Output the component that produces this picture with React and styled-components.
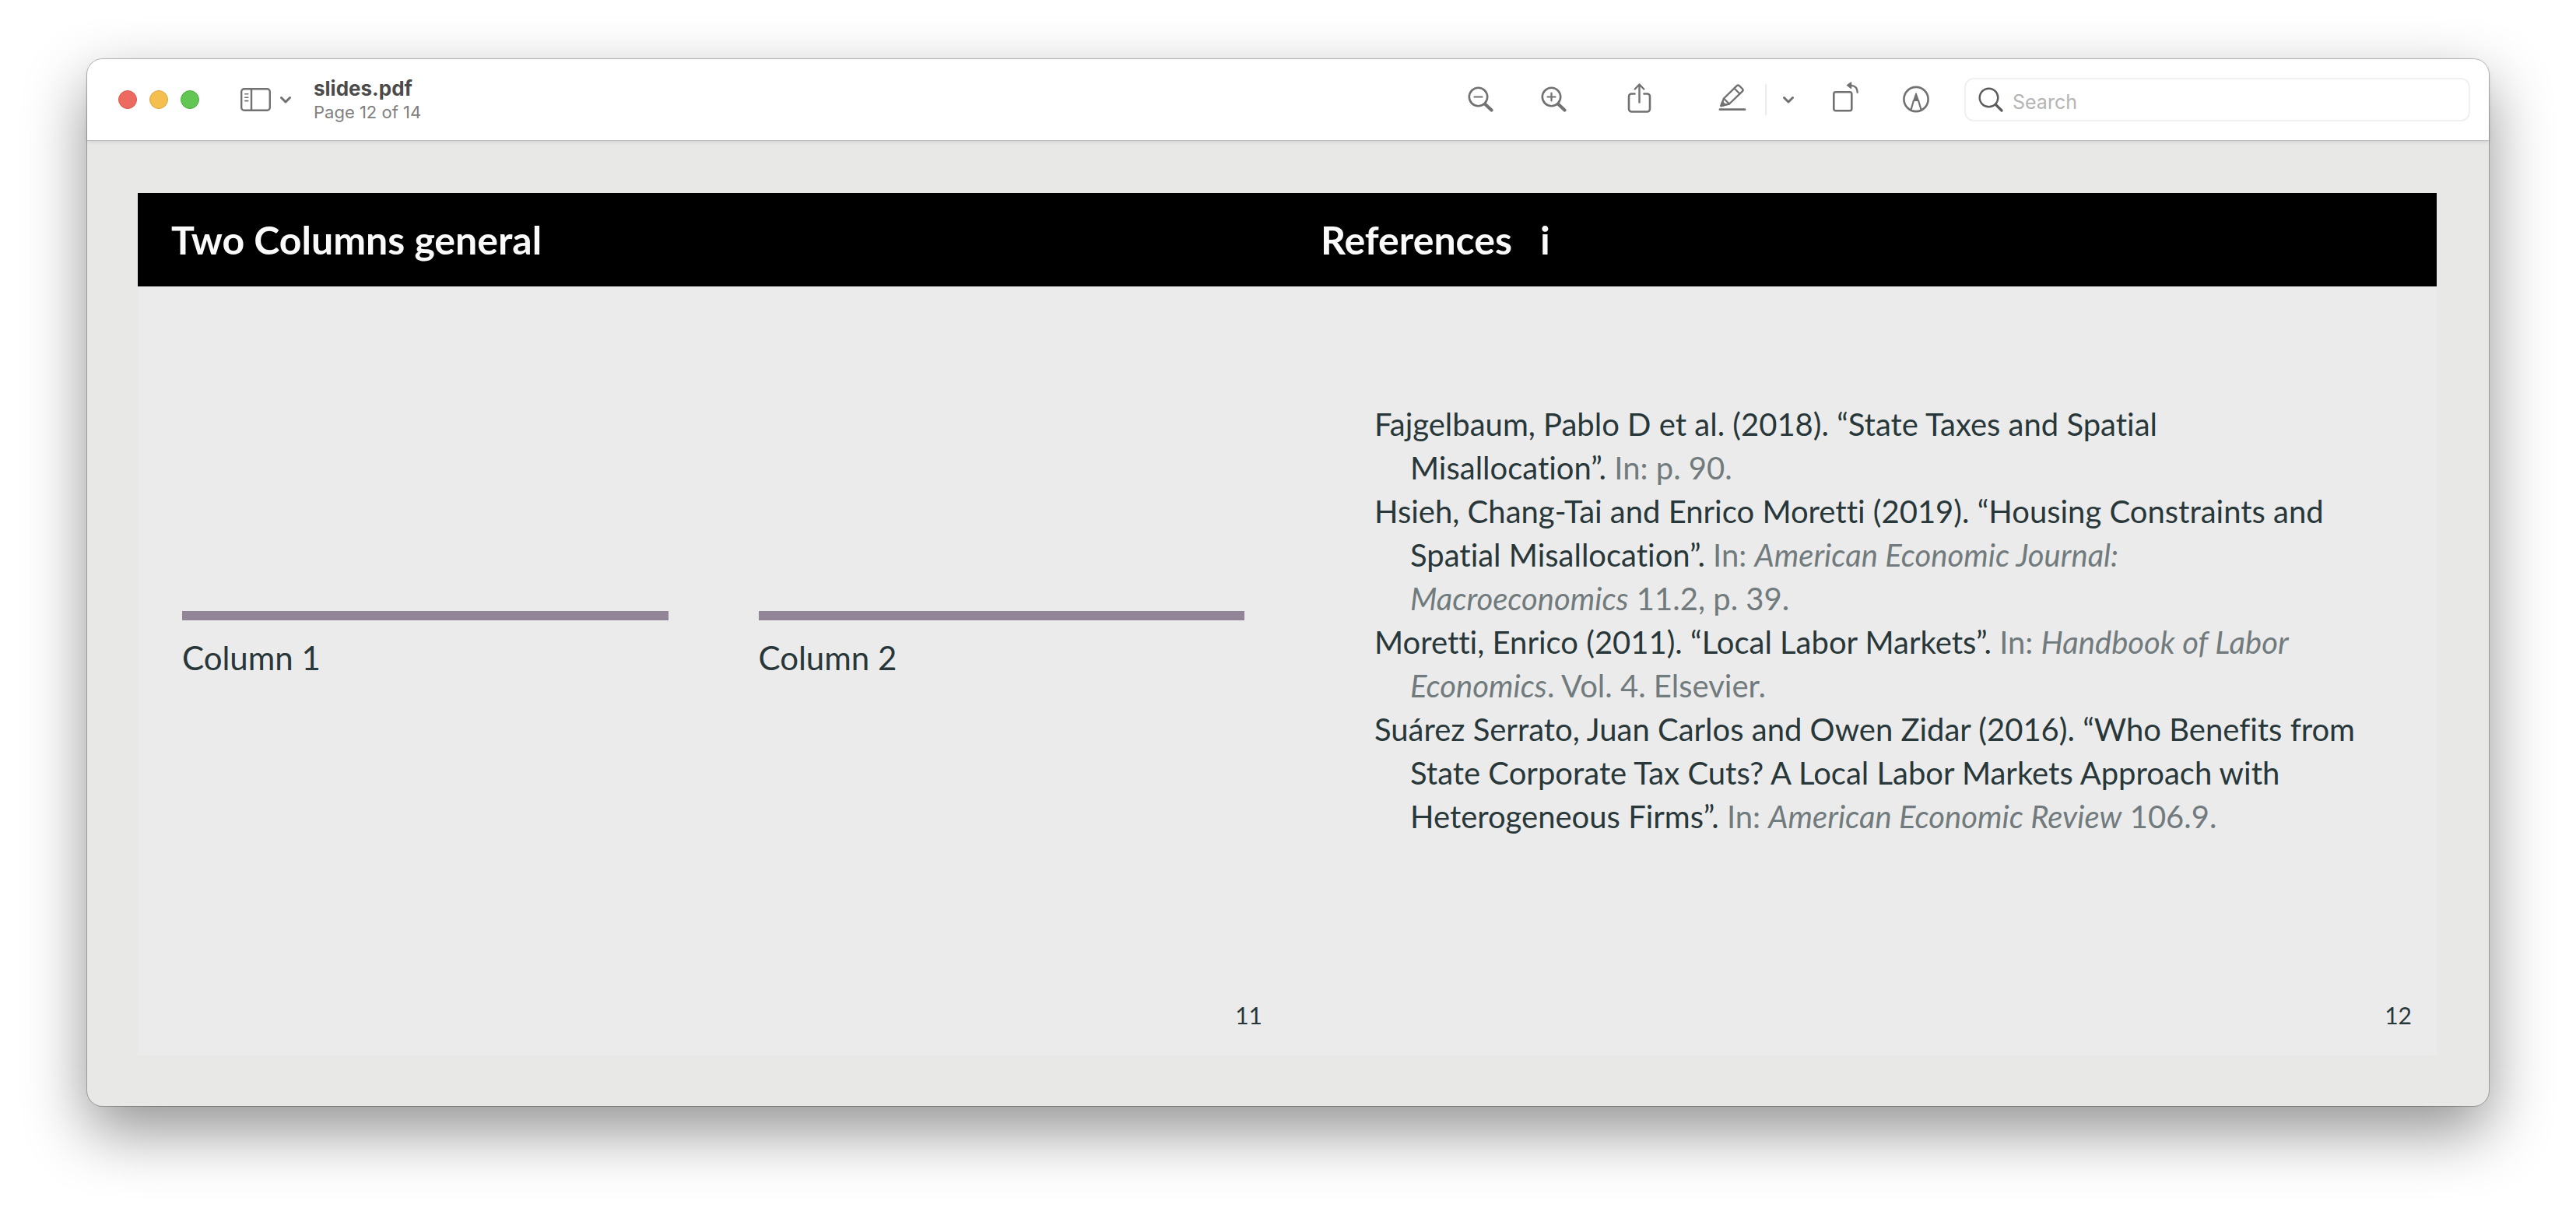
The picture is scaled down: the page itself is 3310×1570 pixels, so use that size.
import React from 'react';
import styled, { createGlobalStyle } from 'styled-components';

const uiFont = 'Inter, "Liberation Sans", sans-serif';
const slideFont = 'Lato, "Open Sans", sans-serif';

const GlobalStyle = createGlobalStyle`
  *, *::before, *::after { box-sizing: border-box; }
  body { margin: 0; background: #ffffff; }
`;

const Desktop = styled.main`
  padding: 76px 112px 148px;
`;

const Window = styled.section`
  border-radius: 20px;
  background: #e8e8e6;
  box-shadow: 0 0 0 1px rgba(0, 0, 0, 0.24), 0 32px 80px rgba(0, 0, 0, 0.43);
`;

const Toolbar = styled.header`
  display: flex;
  align-items: center;
  height: 104px;
  padding: 0 24px 0 40px;
  border-radius: 20px 20px 0 0;
  background: #ffffff;
  box-shadow: 0 1px 0 #bfbfbe, 0 2px 5px rgba(0, 0, 0, 0.12);
  font-family: ${uiFont};
  color: #717171;
`;

const plainButton = `
  display: flex;
  align-items: center;
  justify-content: center;
  flex: none;
  padding: 0;
  border: 0;
  background: none;
  color: inherit;
`;

const Lights = styled.div`
  display: flex;
  gap: 16px;
  margin-right: 53px;
`;

const Light = styled.button`
  ${plainButton}
  width: 24px;
  height: 24px;
  border: 1px solid ${(p) => p.$edge};
  border-radius: 50%;
  background: ${(p) => p.$fill};
`;

const SidebarButton = styled.button`
  ${plainButton}
  gap: 12px;
  margin-right: 29px;
`;

const DocumentInfo = styled.div`
  flex: 1;
`;

const FileName = styled.h1`
  margin: 0;
  font-size: 26px;
  line-height: 32px;
  font-weight: 700;
  color: #4b4b4b;
`;

const PageStatus = styled.p`
  margin: 0;
  font-size: 22px;
  line-height: 28px;
  color: #808080;
`;

const ToolButton = styled.button`
  ${plainButton}
  width: ${(p) => (p.$narrow ? 24 : 40)}px;
  height: 40px;
  margin-right: ${(p) => p.$after}px;
`;

const Divider = styled.span`
  width: 2px;
  height: 40px;
  margin-right: 16px;
  background: #ececec;
`;

const SearchBox = styled.label`
  display: flex;
  align-items: center;
  gap: 12px;
  flex: 0 1 650px;
  height: 56px;
  padding: 0 16px;
  border: 2px solid #f0f0f0;
  border-radius: 12px;
  color: #5a5a5a;
`;

const SearchInput = styled.input`
  flex: 1;
  min-width: 0;
  height: 48px;
  padding: 6px 0 0;
  border: 0;
  outline: 0;
  background: none;
  font: 25px ${uiFont};
  color: #4b4b4b;
  &::placeholder { color: #b4b4b4; opacity: 1; }
`;

const Viewer = styled.div`
  display: grid;
  grid-template-columns: 1fr 1fr;
  padding: 68px 67px 65px 65px;
`;

const Slide = styled.article`
  display: flex;
  flex-direction: column;
  aspect-ratio: 4 / 3;
  background: #ebebeb;
  font-family: ${slideFont};
  font-variant-ligatures: no-common-ligatures;
  color: #283739;
`;

const SlideTitle = styled.h2`
  display: flex;
  align-items: center;
  gap: 36px;
  height: 120px;
  margin: 0;
  padding-left: 43px;
  background: #000000;
  font-size: 50px;
  line-height: 60px;
  font-weight: 700;
  color: #fafafa;
`;

const SlideBody = styled.div`
  display: flex;
  flex: 1;
  flex-direction: column;
  justify-content: center;
`;

const SlideFooter = styled.footer`
  display: flex;
  align-items: flex-end;
  justify-content: flex-end;
  height: 130px;
  padding: 0 32px 34px 0;
  font-size: 30px;
  line-height: 36px;
`;

const Columns = styled.div`
  display: grid;
  grid-template-columns: 1fr 1fr;
  gap: 116px;
  padding: 64px 55px 0 57px;
`;

const Column = styled.p`
  margin: 0;
  padding-top: 20px;
  border-top: 12px solid #918597;
  font-size: 42px;
  line-height: 56px;
`;

const References = styled.ul`
  margin: 0;
  padding: 0 0 0 158px;
  list-style: none;
  font-size: 40px;
  line-height: 56px;
  white-space: nowrap;
`;

const Reference = styled.li`
  text-indent: -46px;
`;

const Source = styled.span`
  color: #717b7d;
`;

const ChevronIcon = () => (
  <svg width="14" height="14" viewBox="0 0 14 14" fill="none" stroke="currentColor" strokeWidth="3" strokeLinecap="round" strokeLinejoin="round" aria-hidden="true">
    <path d="M1.5 4.5 7 10l5.5-5.5" />
  </svg>
);

const Icon = ({ children }) => (
  <svg width="40" height="40" viewBox="0 0 40 40" overflow="visible" fill="none" stroke="currentColor" strokeWidth="2.6" strokeLinecap="round" strokeLinejoin="round" aria-hidden="true">
    {children}
  </svg>
);

const Magnifier = ({ children }) => (
  <Icon>
    <circle cx="17.5" cy="16.5" r="11.7" />
    <path d="M26.5 26 34.5 33.5" strokeWidth="4.2" />
    {children}
  </Icon>
);

const SidebarIcon = () => (
  <svg width="39" height="30" viewBox="0 0 39 30" fill="none" stroke="currentColor" strokeWidth="2.4" strokeLinecap="round" aria-hidden="true">
    <rect x="1.2" y="1.2" width="36.6" height="27.6" rx="3.5" />
    <path d="M14 1.5v27" />
    <path d="M5.8 7.8h4M5.8 12.2h4M5.8 16.6h4" strokeWidth="1.6" />
  </svg>
);

const App = () => (
  <>
    <GlobalStyle />
    <Desktop>
      <Window>
        <Toolbar>
          <Lights>
            <Light type="button" aria-label="Close" $fill="#ec6a5f" $edge="#d85a50" />
            <Light type="button" aria-label="Minimize" $fill="#f5bf4f" $edge="#dba640" />
            <Light type="button" aria-label="Zoom window" $fill="#62c554" $edge="#4fae42" />
          </Lights>
          <SidebarButton type="button" aria-label="Sidebar">
            <SidebarIcon />
            <ChevronIcon />
          </SidebarButton>
          <DocumentInfo>
            <FileName>slides.pdf</FileName>
            <PageStatus>Page 12 of 14</PageStatus>
          </DocumentInfo>
          <ToolButton type="button" aria-label="Zoom out" $after={54}>
            <Magnifier><path d="M12.5 16.5h10" strokeWidth="2.2" /></Magnifier>
          </ToolButton>
          <ToolButton type="button" aria-label="Zoom in" $after={70}>
            <Magnifier><path d="M12.5 16.5h10M17.5 11.5v10" strokeWidth="2.2" /></Magnifier>
          </ToolButton>
          <ToolButton type="button" aria-label="Share" $after={80}>
            <Icon>
              <path d="M14.5 12.5h-4a3.5 3.5 0 0 0-3.500 3.500v16a3.500 3.500 0 0 0 3.500 3.500h20a3.500 3.500 0 0 0 3.500-3.500V16a3.500 3.500 0 0 0-3.500-3.500h-4" />
              <path d="M20.5 23.5V.5M14.7 6.500 20.5.5l5.800 6" strokeWidth="2.4" />
            </Icon>
          </ToolButton>
          <ToolButton type="button" aria-label="Highlight" $after={22}>
            <Icon>
              <path d="M4 32.7h32" strokeWidth="2.8" />
              <path d="M5.5 28 9 18.5 25.5 2.3c1.200-1.100 2.400-1 3.500 0l3.800 3.700c1.100 1.100 1 2.300 0 3.400L16 25.500Z" strokeWidth="2.4" />
              <path d="m22.5 5.500 7 7M9 18.500l7 7" strokeWidth="2.2" />
              <path d="M5.5 28 7 23.500l3.500 3Z" fill="currentColor" />
            </Icon>
          </ToolButton>
          <Divider />
          <ToolButton type="button" aria-label="Highlight options" $narrow $after={42}>
            <ChevronIcon />
          </ToolButton>
          <ToolButton type="button" aria-label="Rotate left" $after={50}>
            <Icon>
              <rect x="4.3" y="10.3" width="23" height="24" rx="2.5" />
              <path d="M27 1.800c5 .3 7.800 4 7.800 10" strokeWidth="2.2" strokeLinecap="butt" />
              <path d="M21.5 1.500 26.500-2v7.300Z" fill="currentColor" strokeWidth="1.5" />
            </Icon>
          </ToolButton>
          <ToolButton type="button" aria-label="Markup" $after={42}>
            <Icon>
              <circle cx="20" cy="19.5" r="15.6" />
              <path d="M13.5 33 17 21h6l3.500 12" strokeWidth="2.2" />
              <path d="M17 21 20 12l3 9Z" fill="currentColor" strokeWidth="1.5" />
            </Icon>
          </ToolButton>
          <SearchBox>
            <svg width="32" height="32" viewBox="0 0 32 32" fill="none" stroke="currentColor" strokeLinecap="round" aria-hidden="true">
              <circle cx="13.5" cy="13.5" r="11.8" strokeWidth="2.4" />
              <path d="m22.5 22.5 7.5 7.500" strokeWidth="3.2" />
            </svg>
            <SearchInput type="search" placeholder="Search" aria-label="Search" />
          </SearchBox>
        </Toolbar>
        <Viewer>
          <Slide>
            <SlideTitle>Two Columns general</SlideTitle>
            <SlideBody>
              <Columns>
                <Column>Column 1</Column>
                <Column>Column 2</Column>
              </Columns>
            </SlideBody>
            <SlideFooter>11</SlideFooter>
          </Slide>
          <Slide>
            <SlideTitle><span>References</span> <span>i</span></SlideTitle>
            <SlideBody>
              <References>
                <Reference>
                  Fajgelbaum, Pablo D et al. (2018). “State Taxes and Spatial<br />
                  Misallocation”. <Source>In: p. 90.</Source>
                </Reference>
                <Reference>
                  Hsieh, Chang-Tai and Enrico Moretti (2019). “Housing Constraints and<br />
                  Spatial Misallocation”. <Source>In: <i>American Economic Journal:<br />
                  Macroeconomics</i> 11.2, p. 39.</Source>
                </Reference>
                <Reference>
                  Moretti, Enrico (2011). “Local Labor Markets”. <Source>In: <i>Handbook of Labor<br />
                  Economics</i>. Vol. 4. Elsevier.</Source>
                </Reference>
                <Reference>
                  Suárez Serrato, Juan Carlos and Owen Zidar (2016). “Who Benefits from<br />
                  State Corporate Tax Cuts? A Local Labor Markets Approach with<br />
                  Heterogeneous Firms”. <Source>In: <i>American Economic Review</i> 106.9.</Source>
                </Reference>
              </References>
            </SlideBody>
            <SlideFooter>12</SlideFooter>
          </Slide>
        </Viewer>
      </Window>
    </Desktop>
  </>
);

export default App;
